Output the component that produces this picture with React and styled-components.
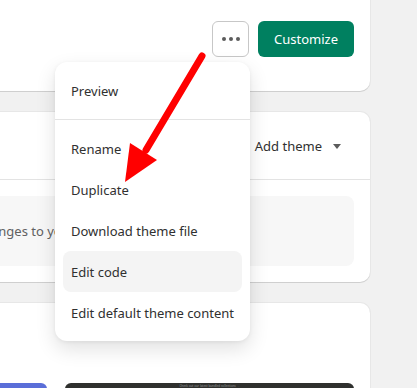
import React from "react";
import styled, { createGlobalStyle } from "styled-components";

const Global = createGlobalStyle`
  html, body { margin: 0; padding: 0; background: #f1f1f1; overflow: hidden; }
  body { font-family: "Noto Sans", "Open Sans", sans-serif; color: #303030; }
`;

const Page = styled.div`
  position: relative;
  width: 417px;
  height: 388px;
  overflow: hidden;
`;

const Column = styled.div`
  display: flex;
  flex-direction: column;
  gap: 21px;
  margin: -40px 47px 0 -92px;
`;

const Card = styled.div`
  background: #fff;
  border-radius: 10px;
  box-shadow: 0 1px 0 rgba(0, 0, 0, 0.1), 0 0 0 1px rgba(0, 0, 0, 0.04);
  padding: ${(p) => p.$pad || "16px"};
`;

const Actions = styled.div`
  display: flex;
  justify-content: flex-end;
  gap: 9px;
  padding: 61px 0 34px;
`;

const IconButton = styled.button`
  width: 37px;
  height: 36px;
  background: #fff;
  border: 1px solid #c7c7c7;
  border-radius: 6px;
  display: flex;
  align-items: center;
  justify-content: center;
  gap: 3px;
  padding: 0;
`;

const Dot = styled.span`
  width: 4px;
  height: 4px;
  border-radius: 50%;
  background: #5c5c5c;
`;

const PrimaryButton = styled.button`
  height: 36px;
  width: 96px;
  background: #008060;
  color: #fff;
  border: none;
  border-radius: 6px;
  font: 13px "Noto Sans", "Open Sans", sans-serif;
`;

const CardHeader = styled.div`
  height: 67px;
  display: flex;
  align-items: center;
  justify-content: flex-end;
  padding: 0 29px 0 16px;
  border-bottom: 1px solid #e3e3e3;
`;

const HeaderButton = styled.div`
  display: flex;
  align-items: center;
  gap: 11px;
  font-size: 13px;
  color: #303030;
  padding-top: 1px;
`;

const Caret = styled.span`
  width: 0;
  height: 0;
  border-left: 4px solid transparent;
  border-right: 4px solid transparent;
  border-top: 5px solid #5c5c5c;
`;

const CardBody = styled.div`
  padding: 16px;
`;

const Notice = styled.div`
  background: #f7f7f7;
  border-radius: 8px;
  height: 70px;
  display: flex;
  align-items: center;
  padding: 0 16px;
  font-size: 13px;
  color: #616161;
  white-space: nowrap;
  overflow: hidden;
`;

const Thumbs = styled.div`
  display: grid;
  grid-template-columns: 123px 1fr;
  gap: 18px;
  padding-top: 64px;
`;

const Thumb = styled.div`
  height: 40px;
  border-radius: 6px;
  background: ${(p) => p.$bg};
  display: flex;
  justify-content: center;
  font-size: 3px;
  line-height: 4px;
  color: #9a9a9a;
  padding-top: 1px;
`;

const Menu = styled.div`
  position: absolute;
  left: 55px;
  top: 62px;
  width: 195px;
  background: #fff;
  border-radius: 12px;
  box-shadow: 0 8px 20px rgba(0, 0, 0, 0.12), 0 1px 4px rgba(0, 0, 0, 0.06);
  display: flex;
  flex-direction: column;
`;

const Section = styled.div`
  padding: 8px;
  border-top: ${(p) => (p.$divided ? "1px solid #e3e3e3" : "none")};
`;

const Item = styled.div`
  height: 41px;
  display: flex;
  align-items: center;
  padding: 0 8px;
  border-radius: 8px;
  font-size: 13px;
  color: #303030;
  background: ${(p) => (p.$active ? "#f4f4f4" : "transparent")};
  white-space: nowrap;
`;

const Arrow = styled.svg`
  position: absolute;
  left: 0;
  top: 0;
  pointer-events: none;
`;

export default function App() {
  return (
    <Page>
      <Global />
      <Column>
        <Card $pad="0 16px">
          <Actions>
            <IconButton aria-label="More actions">
              <Dot />
              <Dot />
              <Dot />
            </IconButton>
            <PrimaryButton>Customize</PrimaryButton>
          </Actions>
        </Card>
        <Card $pad="0">
          <CardHeader>
            <HeaderButton>
              Add theme <Caret />
            </HeaderButton>
          </CardHeader>
          <CardBody>
            <Notice>Make changes to your live theme safely</Notice>
          </CardBody>
        </Card>
        <Card>
          <Thumbs>
            <Thumb $bg="#5a6ed8" />
            <Thumb $bg="#2f302e">Check out our latest bundled collections →</Thumb>
          </Thumbs>
        </Card>
      </Column>
      <Menu>
        <Section>
          <Item>Preview</Item>
        </Section>
        <Section $divided>
          <Item>Rename</Item>
          <Item>Duplicate</Item>
          <Item>Download theme file</Item>
          <Item $active>Edit code</Item>
          <Item>Edit default theme content</Item>
        </Section>
      </Menu>
      <Arrow width="417" height="388" viewBox="0 0 417 388">
        <line x1="202" y1="56" x2="146" y2="150" stroke="#ff0000" strokeWidth="7" strokeLinecap="round" />
        <polygon points="130,143 157,160 125,182" fill="#ff0000" />
      </Arrow>
    </Page>
  );
}
